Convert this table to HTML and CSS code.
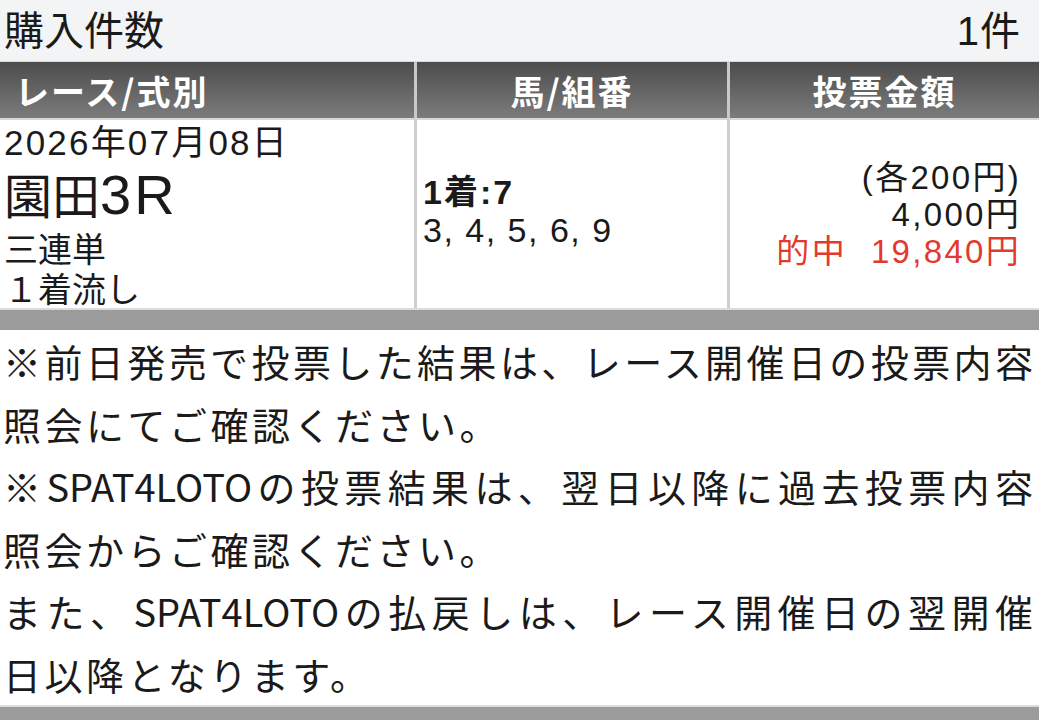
FILE: index.html
```html
<!DOCTYPE html>
<html lang="ja">
<head>
<meta charset="utf-8">
<title>購入件数</title>
<link rel="stylesheet" href="styles.css">
</head>
<body>
<div class="count-row">
  <span class="count-label">購入件数</span>
  <span class="count-value">1件</span>
</div>
<div class="table">
  <div class="th th-left">レース/式別</div>
  <div class="th">馬/組番</div>
  <div class="th">投票金額</div>
  <div class="td race">
    <div class="date">2026年07月08日</div>
    <div class="venue">園田<span class="race-no">3R</span></div>
    <div class="kind">三連単</div>
    <div class="kind">１着流し</div>
  </div>
  <div class="td horses">
    <div class="first">1着:7</div>
    <div class="others">3, 4, 5, 6, 9</div>
  </div>
  <div class="td amount">
    <div>(各200円)</div>
    <div>4,000円</div>
    <div class="hit">的中<span class="hit-amount">19,840円</span></div>
  </div>
</div>
<div class="bar"></div>
<div class="notes">
  <span class="line full">※前日発売で投票した結果は、レース開催日の投票内容</span>
  <span class="line">照会にてご確認ください。</span>
  <span class="line full">※SPAT4LOTOの投票結果は、翌日以降に過去投票内容</span>
  <span class="line">照会からご確認ください。</span>
  <span class="line full">また、SPAT4LOTOの払戻しは、レース開催日の翌開催</span>
  <span class="line">日以降となります。</span>
</div>
<div class="bar bottom"></div>
</body>
</html>
```
FILE: styles.css
```css
html, body {
  margin: 0;
  padding: 0;
  background: #ffffff;
  color: #1a1a1a;
  font-family: "Liberation Sans", "Noto Sans CJK JP", sans-serif;
}
.count-row {
  height: 61px;
  background: #f2f4f5;
  border-bottom: 1px solid #d6d8d9;
  display: flex;
  justify-content: space-between;
  align-items: center;
  padding: 0 18px 0 4px;
  font-size: 40px;
  line-height: 1;
}
.count-value { letter-spacing: 1px; }
.table {
  display: grid;
  grid-template-columns: 414px 313px 1fr;
}
.th {
  height: 56px;
  background: linear-gradient(#4c4c4c, #7c7c7c);
  border-bottom: 2px solid #d8d8d8;
  color: #ffffff;
  font-family: "Noto Sans CJK JP", sans-serif;
  font-weight: bold;
  font-size: 34px;
  letter-spacing: 2px;
  display: flex;
  align-items: center;
  justify-content: center;
  border-left: 3px solid #c9c9c9;
}
.th-left {
  justify-content: flex-start;
  padding-left: 15px;
  border-left: none;
}
.td {
  height: 188px;
  border-left: 3px solid #cfcfcf;
  box-sizing: border-box;
}
.race {
  border-left: none;
  padding: 3px 0 0 4px;
}
.date {
  font-size: 35px;
  line-height: 40px;
  letter-spacing: 2.2px;
}
.venue {
  font-size: 48px;
  line-height: 64px;
}
.race-no {
  font-size: 56px;
  letter-spacing: 3px;
}
.kind {
  font-size: 34px;
  line-height: 40px;
}
.horses {
  display: flex;
  flex-direction: column;
  justify-content: center;
  padding: 0 0 6px 6px;
  font-size: 34px;
  line-height: 38px;
}
.first {
  font-weight: bold;
  letter-spacing: 2px;
}
.others { letter-spacing: 1.5px; }
.amount {
  display: flex;
  flex-direction: column;
  justify-content: center;
  align-items: flex-end;
  padding: 0 18px 0 0;
  font-size: 33px;
  line-height: 37px;
  letter-spacing: 2.3px;
}
.hit { color: #e23a2e; }
.hit-amount { margin-left: 24px; }
.bar {
  height: 20px;
  background: #9b9b9b;
  border-top: 2px solid #dcdcdc;
}
.bottom {
  height: 20px;
}
.notes {
  padding: 0 6px 0 3px;
  font-family: "Noto Sans CJK JP", sans-serif;
  font-size: 38px;
  line-height: 62.5px;
  color: #1a1a1a;
}
.line {
  display: block;
  letter-spacing: 3.5px;
}
.line.full {
  text-align: justify;
  text-align-last: justify;
  letter-spacing: 0;
}
```
